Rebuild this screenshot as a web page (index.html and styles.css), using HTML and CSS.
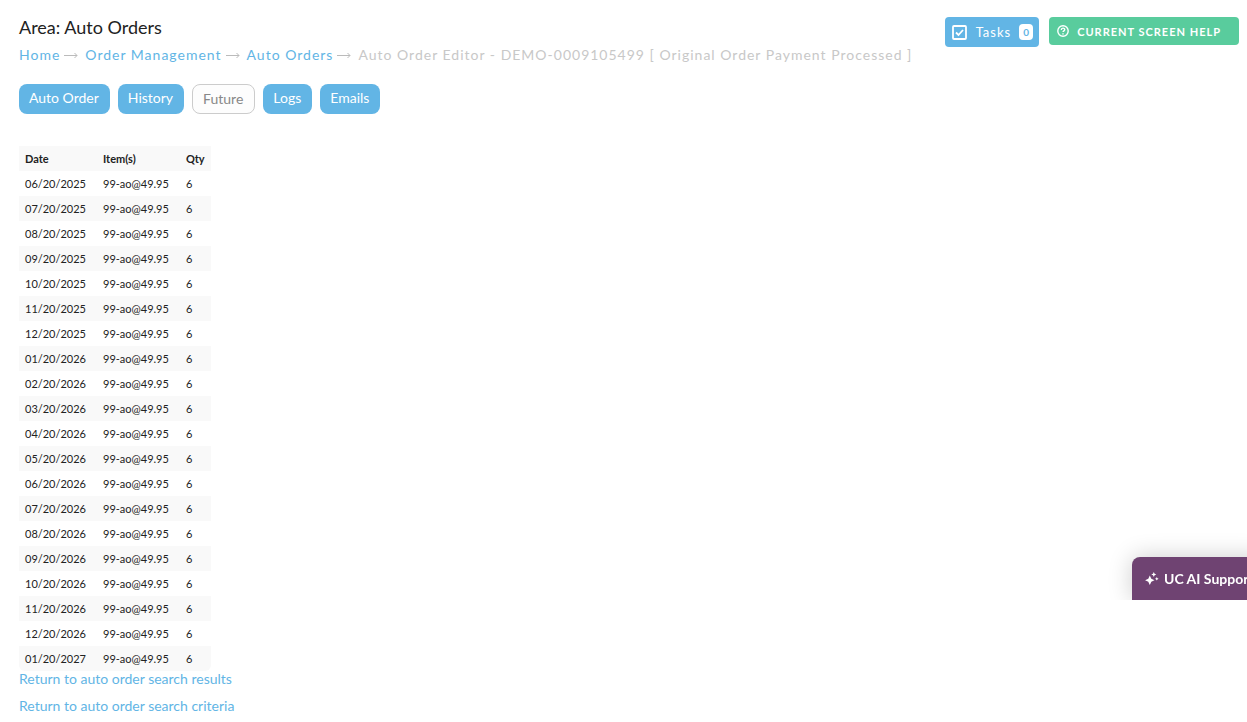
FILE: index.html
```html
<!DOCTYPE html>
<html lang="en">
<head>
<meta charset="utf-8">
<title>Auto Orders</title>
<link rel="stylesheet" href="styles.css">
</head>
<body>
<header class="header">
  <div class="heading">
    <h1 class="title">Area: Auto Orders</h1>
    <nav class="crumbs" aria-label="Breadcrumb"><a href="#">Home</a><svg class="arrow" viewBox="0 0 16 12"><path d="M0 6.500h13M10.500 4l2.500 2.500-2.500 2.500"/></svg><a href="#">Order Management</a><svg class="arrow" viewBox="0 0 16 12"><path d="M0 6.500h13M10.500 4l2.500 2.500-2.500 2.500"/></svg><a href="#">Auto Orders</a><svg class="arrow" viewBox="0 0 16 12"><path d="M0 6.500h13M10.500 4l2.500 2.500-2.500 2.500"/></svg><span>Auto Order Editor - DEMO-0009105499 [ Original Order Payment Processed ]</span></nav>
  </div>
  <div class="actions">
    <button class="tasks" type="button"><svg class="icon-check" viewBox="0 0 15 15"><rect x="1" y="1" width="13" height="13" rx="1"/><path d="M4 7.500l2.500 2.500L11 5"/></svg>Tasks<span class="badge">0</span></button>
    <button class="help" type="button"><svg class="icon-help" viewBox="0 0 12 12"><circle cx="6" cy="6" r="5.200"/><path d="M4.300 4.900C4.300 2.500 7.700 2.600 7.700 4.700C7.700 5.800 6 5.900 6 7.100M6 8.200v1.200"/></svg>Current Screen Help</button>
  </div>
</header>
<main>
  <nav class="tabs" aria-label="Sections">
    <a class="tab" href="#">Auto Order</a>
    <a class="tab" href="#">History</a>
    <a class="tab current" href="#" aria-current="page">Future</a>
    <a class="tab" href="#">Logs</a>
    <a class="tab" href="#">Emails</a>
  </nav>
  <table class="orders">
    <thead><tr><th>Date</th><th>Item(s)</th><th>Qty</th></tr></thead>
    <tbody>
      <tr><td>06/20/2025</td><td>99-ao@49.95</td><td>6</td></tr>
      <tr><td>07/20/2025</td><td>99-ao@49.95</td><td>6</td></tr>
      <tr><td>08/20/2025</td><td>99-ao@49.95</td><td>6</td></tr>
      <tr><td>09/20/2025</td><td>99-ao@49.95</td><td>6</td></tr>
      <tr><td>10/20/2025</td><td>99-ao@49.95</td><td>6</td></tr>
      <tr><td>11/20/2025</td><td>99-ao@49.95</td><td>6</td></tr>
      <tr><td>12/20/2025</td><td>99-ao@49.95</td><td>6</td></tr>
      <tr><td>01/20/2026</td><td>99-ao@49.95</td><td>6</td></tr>
      <tr><td>02/20/2026</td><td>99-ao@49.95</td><td>6</td></tr>
      <tr><td>03/20/2026</td><td>99-ao@49.95</td><td>6</td></tr>
      <tr><td>04/20/2026</td><td>99-ao@49.95</td><td>6</td></tr>
      <tr><td>05/20/2026</td><td>99-ao@49.95</td><td>6</td></tr>
      <tr><td>06/20/2026</td><td>99-ao@49.95</td><td>6</td></tr>
      <tr><td>07/20/2026</td><td>99-ao@49.95</td><td>6</td></tr>
      <tr><td>08/20/2026</td><td>99-ao@49.95</td><td>6</td></tr>
      <tr><td>09/20/2026</td><td>99-ao@49.95</td><td>6</td></tr>
      <tr><td>10/20/2026</td><td>99-ao@49.95</td><td>6</td></tr>
      <tr><td>11/20/2026</td><td>99-ao@49.95</td><td>6</td></tr>
      <tr><td>12/20/2026</td><td>99-ao@49.95</td><td>6</td></tr>
      <tr><td>01/20/2027</td><td>99-ao@49.95</td><td>6</td></tr>
    </tbody>
  </table>
  <div class="returns">
    <a href="#">Return to auto order search results</a>
    <a href="#">Return to auto order search criteria</a>
  </div>
</main>
<div class="support-dock">
  <button class="support" type="button"><svg class="icon-spark" viewBox="0 0 14 14"><path d="M4.800 3.500l1.500 3.200 3.200 1.500-3.200 1.500-1.500 3.200-1.500-3.200L.1 8.200l3.200-1.500zM8.800 0l.8 1.700 1.700.8-1.700.8-.8 1.700L8 3.300l-1.700-.8L8 1.700zM11.800 5l.6 1.200 1.200.6-1.200.6-.6 1.200-.6-1.200-1.200-.6 1.200-.6z"/></svg>UC AI Support</button>
</div>
</body>
</html>
```
FILE: styles.css
```css
* { box-sizing: border-box; }
body {
  margin: 0;
  padding: 16px 8px 0 19px;
  font: 14px/20px Lato, sans-serif;
  color: #222;
  background: #fff;
  overflow: hidden;
}
a { color: #62b5e5; text-decoration: none; }
button { border: 0; font-family: inherit; color: #fff; cursor: pointer; }
.header { display: flex; justify-content: space-between; align-items: flex-start; }
.title { margin: 0 0 7px; font-size: 18px; line-height: 22px; font-weight: 400; }
.crumbs { display: flex; align-items: center; letter-spacing: 1px; color: #c8c8c8; }
.arrow { width: 16px; height: 12px; margin: 0 5px 0 4px; fill: none; stroke: #bbb; stroke-width: 1; }
.actions { display: flex; gap: 10px; align-items: flex-start; padding-top: 1px; }
.tasks, .help { display: flex; align-items: center; border-radius: 4px; }
.tasks { height: 30px; padding: 0 6px 0 7px; gap: 8px; background: #62b5e5; font-size: 13px; letter-spacing: 1px; }
.icon-check { width: 15px; height: 15px; margin-right: 1px; fill: none; stroke: #fff; stroke-width: 1.8; }
.badge { width: 14px; border-radius: 4px; background: #fff; color: #62b5e5; font-size: 10px; line-height: 16px; font-weight: 700; letter-spacing: 0; }
.help { height: 28px; padding: 0 18px 0 8px; gap: 8px; background: #59cc9d; font-size: 11px; font-weight: 700; letter-spacing: 1px; text-transform: uppercase; }
.icon-help { width: 12px; height: 12px; fill: none; stroke: #fff; stroke-width: 1.4; }
.tabs { display: flex; gap: 8px; margin: 19px 0 32px; }
.tab { padding: 4px 11px 6px 10px; border-radius: 8px; background: #62b5e5; color: #fff; }
.current { padding-bottom: 4px; border: 1px solid #ccc; background: #fdfdfd; color: #888; }
.orders { border-collapse: collapse; border-radius: 0 0 6px 6px; overflow: hidden; font-size: 11px; line-height: 15px; }
.orders th, .orders td { padding: 5px 11px 5px 6px; text-align: left; }
.orders th:last-child, .orders td:last-child { padding-right: 6px; }
.orders thead tr, .orders tbody tr:nth-child(even) { background: #f9f9f9; }
.returns { display: flex; flex-direction: column; align-items: flex-start; gap: 7px; margin-top: -2px; }
.support-dock { position: fixed; right: 0; bottom: 122px; width: 145px; padding: 30px 0 0 30px; overflow: hidden; }
.support { display: flex; align-items: center; gap: 5px; height: 43px; padding: 0 13px; border-radius: 8px 0 0; background: #6f4372; box-shadow: 0 0 24px #0003; font-size: 14px; font-weight: 700; white-space: nowrap; }
.icon-spark { width: 14px; height: 14px; flex: none; fill: #fff; }
```
